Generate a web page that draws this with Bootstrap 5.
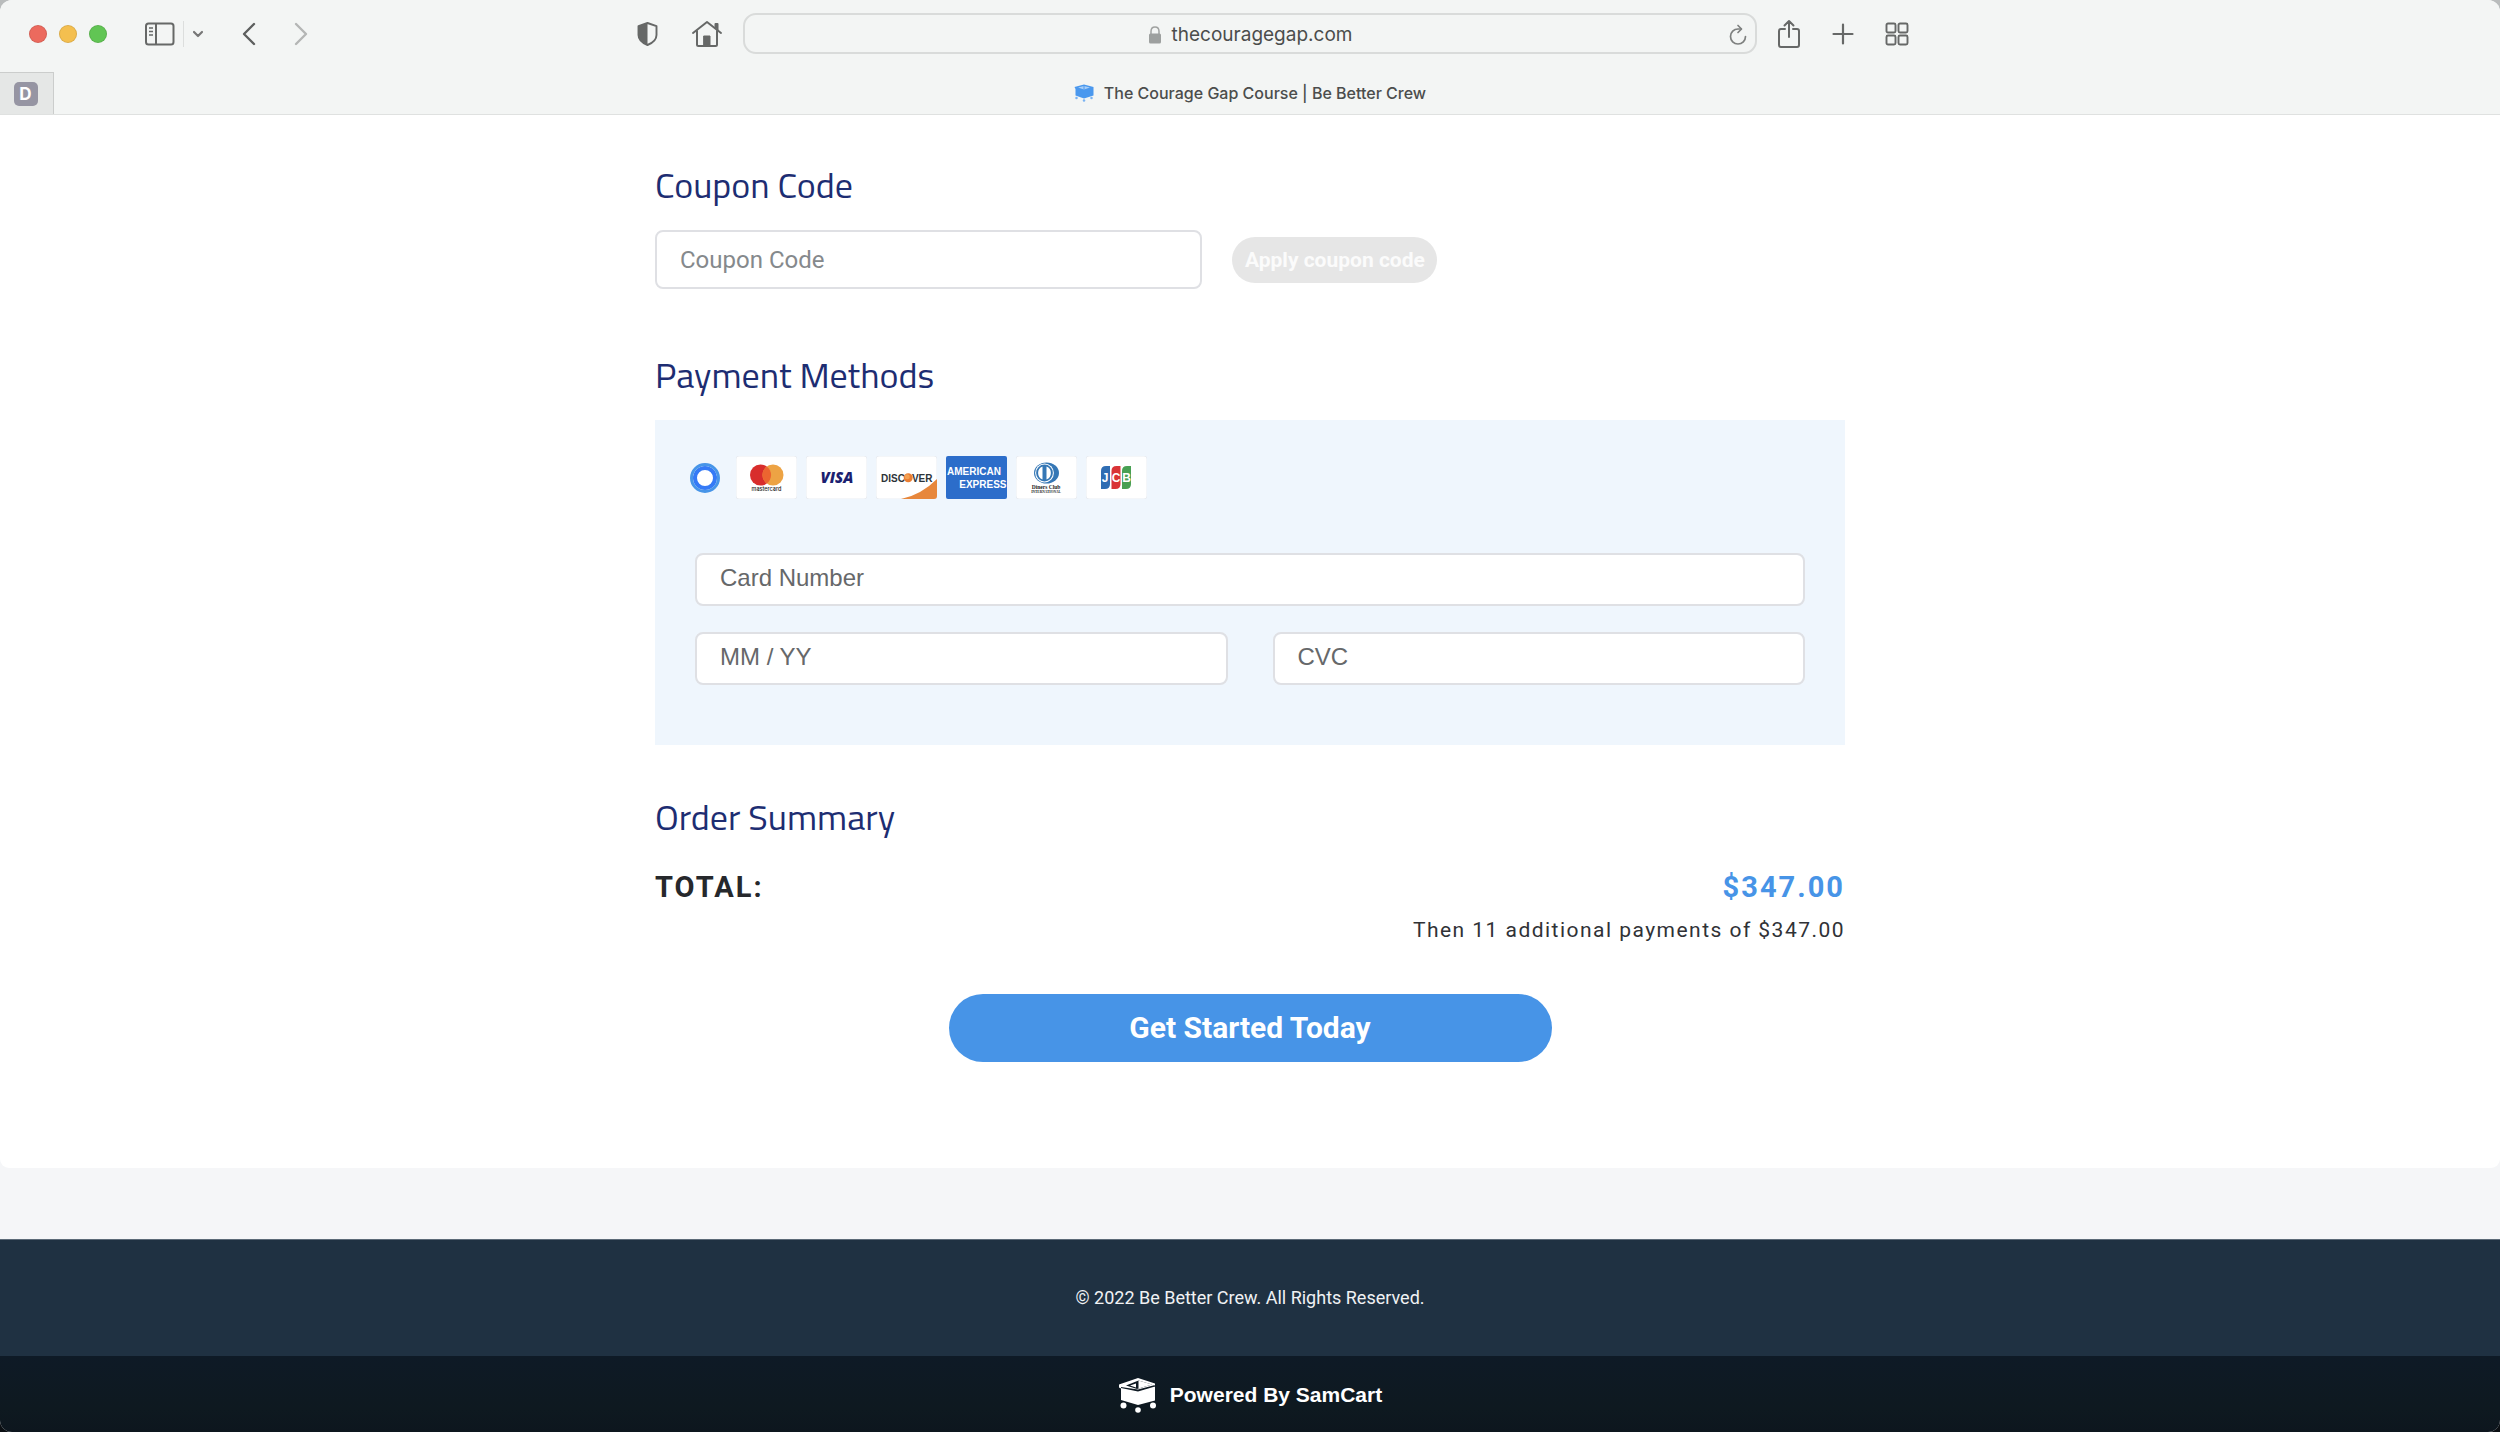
<!DOCTYPE html>
<html lang="en">
<head>
<meta charset="utf-8">
<meta name="viewport" content="width=device-width, initial-scale=1">
<title>The Courage Gap Course | Be Better Crew</title>
<link rel="stylesheet" href="https://cdn.jsdelivr.net/npm/bootstrap@5.3.0/dist/css/bootstrap.min.css">
<style>
  body { background: linear-gradient(#b9bcbc 50%, #0b0f13 50%); font-family: Roboto, sans-serif; color: #26282c; }
  svg { display: block; flex: none; }
  .window { min-height: 100vh; border-radius: 12px; overflow: hidden; background: #f5f6f8; }

  /* browser chrome */
  .chrome { background: #f3f5f4; border-bottom: 1px solid #dfe1e0; font-family: Inter, sans-serif; color: #4b4d4c; }
  .toolbar { height: 72px; padding: 0 29px 5px; }
  .tool-side { flex: 1 1 0; }
  .address-field { width: 43%; max-width: 1014px; height: 41px; border: 2px solid #d9dbda; border-radius: 13px; padding: 2px 8px 0; font-size: 19px; line-height: 24px; }
  .tool { border: 0; background: none; padding: 0; display: block; color: #666867; }
  .tool-gap { margin-left: 38px; }
  .tool-first { margin-left: 20px; }
  .light { width: 18px; height: 18px; border-radius: 50%; border: 1px solid rgba(0,0,0,.1); padding: 0; }
  .light-red { background: #ec6a5e; } .light-yellow { background: #f4bf4f; } .light-green { background: #61c554; }
  .tool-rule { width: 1px; height: 26px; background: #dcdedd; }
  .tabs { height: 42px; }
  .pinned { width: 54px; background: #e5e7e6; border-top: 1px solid #cbcdcc; border-right: 1px solid #cbcdcc; padding-right: 2px; }
  .pinned-icon { width: 24px; height: 24px; border-radius: 5px; background: #9695a3; color: #fff; font-weight: 700; font-size: 17px; line-height: 24px; text-align: center; }
  .active-tab { gap: 10px; margin-right: 54px; }
  .tab-title { font-size: 16px; line-height: 24px; font-weight: 500; color: #4b4d4c; }

  /* checkout */
  .checkout { background: #fff; border-radius: 0 0 9px 9px; padding: 48px 24px 106px; }
  .checkout-inner { max-width: 1190px; }
  .section-title { font-family: "Titillium Web", "Open Sans", sans-serif; font-weight: 400; font-size: 36px; line-height: 43px; margin-bottom: 24px; color: #1d2d72; }
  .field { border: 2px solid #dfe0e4; border-radius: 8px; font-size: 24px; color: #4f5153; }
  .field::placeholder { color: #85898c; opacity: 1; }
  .coupon-row { gap: 30px; margin-bottom: 64px; }
  .coupon-field { width: 46%; height: 59px; padding: 0 23px; }
  .coupon-btn { height: 46px; width: 205px; border-radius: 23px; font-weight: 700; font-size: 21px; line-height: 24px; padding: 0; border: 0; }
  .coupon-btn:disabled { background: #e6e6e6; color: #fbfbfb; opacity: 1; }
  .pay-panel { background: #eff6fd; padding: 36px 40px 60px; margin-bottom: 50px; }
  .pay-choice { margin: 0 0 54px -5px; }
  .pay-cards { gap: 9px; }
  .pay-radio { appearance: none; width: 30px; height: 30px; margin: 0 16px 0 0; border-radius: 50%; background: #fff; border: 3px solid #4795e8; box-shadow: inset 0 0 0 4px #357af6; }
  .card-row { gap: 45px; margin-top: 26px; }
  .card-field { height: 53px; padding: 0 23px 3px; font-family: "Liberation Sans", sans-serif; }
  .card-field::placeholder { color: #66686a; }
  .total-line { font-size: 29px; line-height: 36px; font-weight: 700; letter-spacing: .07em; margin-top: 31px; }
  .price { color: #4794e7; }
  .terms { font-size: 21px; line-height: 32px; letter-spacing: .07em; color: #303236; margin: 9px 0 48px; }
  .submit-btn { width: 603px; max-width: 100%; height: 68px; border-radius: 34px; background: #4794e7; color: #fff; font-weight: 700; font-size: 30px; line-height: 36px; border: 0; }

  /* footer */
  .spacer-band { height: 71px; }
  .copyright { background: #1f3142; border-top: 1px solid #5c6a78; color: #f0f2f4; font-size: 18px; line-height: 24px; padding: 46px 0 46px; }
  .powered { gap: 13px; background: linear-gradient(#0e1a26, #0e1920 70%, #0d161e); color: #fff; height: 76px; padding-top: 2px; font-family: "Liberation Sans", sans-serif; font-weight: 700; font-size: 21px; line-height: 24px; }
</style>
<script src="https://cdn.jsdelivr.net/npm/bootstrap@5.3.0/dist/js/bootstrap.bundle.min.js"></script>
</head>
<body>
<div class="window d-flex flex-column">
  <header class="chrome">
      <div class="toolbar d-flex align-items-center">
        <div class="tool-side d-flex align-items-center">
          <div class="d-flex" style="gap:12px">
            <button class="light light-red" aria-label="Close"></button>
            <button class="light light-yellow" aria-label="Minimize"></button>
            <button class="light light-green" aria-label="Zoom"></button>
          </div>
          <button class="tool tool-gap" aria-label="Sidebar"><svg width="30" height="24" viewBox="0 0 30 24" fill="none" stroke="currentColor" stroke-width="2"><rect x="1" y="1.500" width="27.500" height="21" rx="2.500"/><path d="M11 1.500v21"/><path d="M4 6h4M4 9.500h4M4 13h4" stroke-width="1.400"/></svg></button>
          <span class="tool-rule ms-2"></span>
          <button class="tool ms-2" aria-label="Tab groups"><svg width="12" height="10" viewBox="0 0 12 10" fill="none" stroke="#777" stroke-width="2.200" stroke-linecap="round" stroke-linejoin="round"><path d="M2 3l4 4 4-4"/></svg></button>
          <button class="tool tool-gap" aria-label="Back"><svg width="14" height="24" viewBox="0 0 14 24" fill="none" stroke="#5d5f5e" stroke-width="2.400" stroke-linecap="round" stroke-linejoin="round"><path d="M12 2L2 12l10 10"/></svg></button>
          <button class="tool tool-gap" aria-label="Forward"><svg width="14" height="24" viewBox="0 0 14 24" fill="none" stroke="#b4b6b5" stroke-width="2.400" stroke-linecap="round" stroke-linejoin="round"><path d="M2 2l10 10L2 22"/></svg></button>
          <button class="tool ms-auto me-4" aria-label="Privacy report"><svg width="23" height="26" viewBox="0 0 23 26"><path d="M11.500 2L20.500 5.200V14c0 4.500-4 8-9 10-5-2-9-5.500-9-10V5.200z" fill="none" stroke="currentColor" stroke-width="1.900" stroke-linejoin="round"/><path d="M11.500 2L2.500 5.200V14c0 4.500 4 8 9 10z" fill="currentColor"/></svg></button>
          <button class="tool ms-2 me-3 pe-1" aria-label="Home"><svg width="32" height="28" viewBox="0 0 32 28" fill="none" stroke="currentColor" stroke-width="2" stroke-linecap="round" stroke-linejoin="round"><path d="M2 13L16 2l14 11"/><path d="M6 11v13.500q0 1.500 1.500 1.500h17q1.500 0 1.500-1.500V11"/><path d="M24.500 8V4h2v6"/><path d="M13 16h6v10h-6z" fill="currentColor" stroke-width="1"/></svg></button>
        </div>
        <div class="address-field d-flex align-items-center">
          <span class="tool-side"></span>
          <span class="d-flex align-items-center" style="gap:10px"><svg width="14" height="18" viewBox="0 0 14 18"><path d="M3 8V5.500Q3 1 7 1t4 4.500V8" fill="none" stroke="#a0a2a1" stroke-width="1.500"/><rect x="1" y="7.500" width="12" height="10" rx="1.500" fill="#9da09f"/></svg><span>thecouragegap.com</span></span>
          <span class="tool-side d-flex justify-content-end"><button class="tool" aria-label="Reload"><svg width="18" height="22" viewBox="0 0 18 22" fill="none" stroke="#7e807f" stroke-width="1.700" stroke-linecap="round" stroke-linejoin="round"><path d="M16.500 12.500A7.500 7.500 0 1 1 9 5h3"/><path d="M9 1.500L12.500 5 9 8.500"/></svg></button></span>
        </div>
        <div class="tool-side d-flex align-items-center" style="gap:31px">
          <button class="tool tool-first" aria-label="Share"><svg width="24" height="30" viewBox="0 0 24 30" fill="none" stroke="currentColor" stroke-width="2" stroke-linecap="round" stroke-linejoin="round"><path d="M8 10H4Q2 10 2 12v14q0 2 2 2h16q2 0 2-2V12q0-2-2-2h-4M12 18V2M7.500 6.500L12 2l4.500 4.500"/></svg></button>
          <button class="tool" aria-label="New tab"><svg width="22" height="22" viewBox="0 0 22 22" stroke="currentColor" stroke-width="2.200" stroke-linecap="round"><path d="M11 1.500v19M1.500 11h19"/></svg></button>
          <button class="tool" aria-label="Tab overview"><svg width="24" height="24" viewBox="0 0 24 24" fill="none" stroke="currentColor" stroke-width="1.900"><rect x="1.500" y="1.500" width="9" height="9" rx="1.500"/><rect x="13.500" y="1.500" width="9" height="9" rx="1.500"/><rect x="1.500" y="13.500" width="9" height="9" rx="1.500"/><rect x="13.500" y="13.500" width="9" height="9" rx="1.500"/></svg></button>
        </div>
      </div>
      <nav class="tabs d-flex" aria-label="Tabs">
        <a href="#" class="pinned d-flex align-items-center justify-content-center text-decoration-none"><span class="pinned-icon">D</span></a>
        <a href="#" class="active-tab flex-grow-1 d-flex align-items-center justify-content-center text-decoration-none">
          <svg width="20" height="18" viewBox="0 0 40 36"><path d="M1 6L20 1l19 5v17L20 29 3 23V10z" fill="#4a98ee"/><path d="M8 7l12-3 12 3-12 4z" fill="#a9cff8"/><path d="M20 4v7" stroke="#4a98ee" stroke-width="2"/><circle cx="5" cy="28" r="2.500" fill="#7ab3f2"/><circle cx="35" cy="28" r="2.500" fill="#7ab3f2"/><circle cx="20" cy="33" r="2.500" fill="#7ab3f2"/></svg>
          <span class="tab-title">The Courage Gap Course | Be Better Crew</span>
        </a>
      </nav>
  </header>

  <main class="checkout">
    <form class="checkout-inner mx-auto">
      <h2 class="section-title"><label for="coupon">Coupon Code</label></h2>
      <div class="coupon-row d-flex align-items-center">
        <input id="coupon" type="text" class="field coupon-field form-control" placeholder="Coupon Code">
        <button type="button" class="btn coupon-btn" disabled>Apply coupon code</button>
      </div>

      <h2 class="section-title">Payment Methods</h2>
      <section class="pay-panel">
        <div class="pay-choice d-flex align-items-center">
          <input type="radio" class="pay-radio" id="payCard" name="pay" checked aria-label="Credit card">
          <label for="payCard" class="pay-cards d-flex">
            <svg width="61" height="43" viewBox="0 0 61 43" role="img" aria-label="Mastercard"><rect width="61" height="43" rx="3" fill="#fff" stroke="#e9edf2"/><circle cx="24.500" cy="19" r="10.500" fill="#d82d2c"/><circle cx="37" cy="19" r="10.500" fill="#eda344"/><path d="M30.750 10.500a10.500 10.500 0 0 1 0 17a10.500 10.500 0 0 1 0-17z" fill="#ec6530"/><text x="30.500" y="35" text-anchor="middle" font-family="Inter,sans-serif" font-size="5.500" font-weight="500" fill="#222">mastercard</text></svg>
            <svg width="61" height="43" viewBox="0 0 61 43" role="img" aria-label="Visa"><rect width="61" height="43" rx="3" fill="#fff" stroke="#e9edf2"/><text x="31" y="27" text-anchor="middle" font-family="Open Sans,sans-serif" font-size="15" font-weight="800" font-style="italic" fill="#1b1f71">VISA</text></svg>
            <svg width="61" height="43" viewBox="0 0 61 43" role="img" aria-label="Discover"><rect width="61" height="43" rx="3" fill="#fff" stroke="#e9edf2"/><path d="M25 43Q45 39 61 23v17q0 3-3 3z" fill="#e7873c"/><g font-family="Liberation Sans,sans-serif" font-size="10" font-weight="700" fill="#2c3338"><text x="5" y="25.500">DISC</text><text x="56.500" y="25.500" text-anchor="end">VER</text></g><circle cx="32.200" cy="21.800" r="4.500" fill="#ea7d32"/><circle cx="31.200" cy="20.800" r="2.500" fill="#f3a052"/></svg>
            <svg width="61" height="43" viewBox="0 0 61 43" role="img" aria-label="American Express"><rect width="61" height="43" rx="2" fill="#2c6dca"/><g font-family="Liberation Sans,sans-serif" font-size="10" font-weight="700" fill="#fff"><text x="1" y="19">AMERICAN</text><text x="60.500" y="31.500" text-anchor="end">EXPRESS</text></g></svg>
            <svg width="61" height="43" viewBox="0 0 61 43" role="img" aria-label="Diners Club International"><rect width="61" height="43" rx="3" fill="#fff" stroke="#e9edf2"/><ellipse cx="30.500" cy="17" rx="12.500" ry="10.500" fill="#3577b5"/><circle cx="28.500" cy="17" r="9.400" fill="#fff"/><circle cx="28.500" cy="17" r="8.400" fill="#3577b5"/><path d="M26.500 10.500v13a7 7 0 0 1 0-13zM30.500 10.500v13a7 7 0 0 0 0-13z" fill="#fff"/><g font-family="Liberation Serif,serif" fill="#222" text-anchor="middle"><text x="30" y="33" font-size="5.500" font-weight="700">Diners Club</text><text x="30" y="36.500" font-size="3.500" font-weight="700">INTERNATIONAL</text></g></svg>
            <svg width="61" height="43" viewBox="0 0 61 43" role="img" aria-label="JCB"><rect width="61" height="43" rx="3" fill="#fff" stroke="#e9edf2"/><path d="M15 15q0-5 5-5h4v18q0 5-5 5h-4z" fill="#2f6db3"/><path d="M25.500 15q0-5 5-5h4v18q0 5-5 5h-4z" fill="#d93336"/><path d="M36 15q0-5 5-5h4v18q0 5-5 5h-4z" fill="#48a053"/><g font-family="Liberation Sans,sans-serif" font-size="12" font-weight="700" fill="#fff" text-anchor="middle"><text x="19" y="26">J</text><text x="30" y="26">C</text><text x="40.500" y="26">B</text></g></svg>
          </label>
        </div>
        <input type="text" class="field card-field form-control" placeholder="Card Number" aria-label="Card Number">
        <div class="card-row d-flex">
          <input type="text" class="field card-field form-control" placeholder="MM / YY" aria-label="Expiry date">
          <input type="text" class="field card-field form-control" placeholder="CVC" aria-label="CVC">
        </div>
      </section>

      <h2 class="section-title mb-0">Order Summary</h2>
      <div class="total-line d-flex justify-content-between"><span>TOTAL:</span><span class="price">$347.00</span></div>
      <p class="terms text-end">Then 11 additional payments of $347.00</p>
      <div class="text-center"><button type="submit" class="btn submit-btn">Get Started Today</button></div>
    </form>
  </main>

  <div class="spacer-band"></div>
  <footer>
    <div class="copyright text-center">© 2022 Be Better Crew. All Rights Reserved.</div>
    <div class="powered d-flex align-items-center justify-content-center">
      <svg width="39" height="36" viewBox="0 0 39 36"><path fill="#fff" fill-rule="evenodd" d="M1 7.500L20 1l17 5.500v17L20 28 3 23V11.500L1 10.500zM8 8.500L19 12l15-4.500L20.500 3.500zM3 10l0 1 17 3.500 17-5V8L20 12.500z"/><path fill="#fff" d="M20.500 3.500L34 7.500l-13.500 4zM12 8.500l6-2v4z"/><circle cx="5.500" cy="28.500" r="3" fill="#fff"/><circle cx="35" cy="28.500" r="3" fill="#fff"/><circle cx="20" cy="33" r="2.800" fill="#fff"/></svg>
      <span>Powered By SamCart</span>
    </div>
  </footer>
</div>
</body>
</html>
